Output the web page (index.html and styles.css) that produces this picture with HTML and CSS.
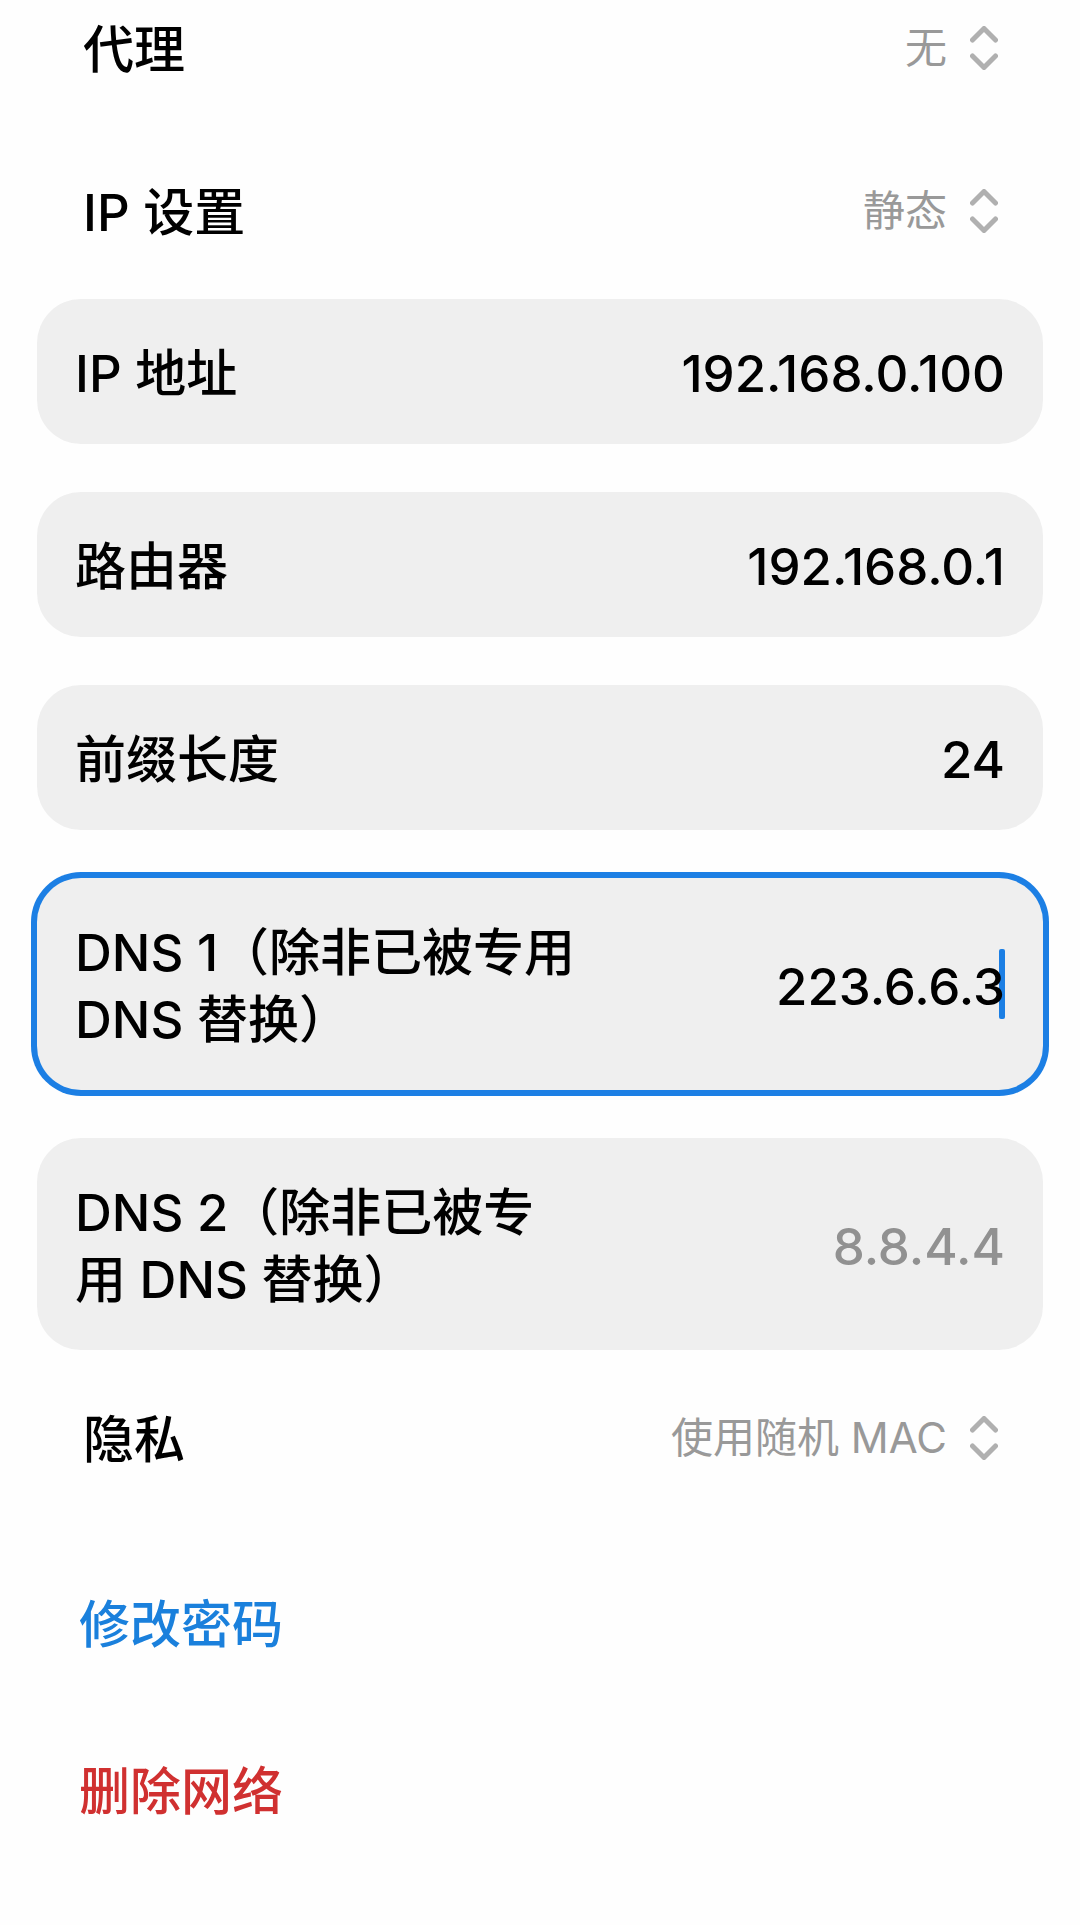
FILE: index.html
```
<!DOCTYPE html>
<html lang="zh-CN">
<head>
<meta charset="utf-8">
<meta name="viewport" content="width=device-width, initial-scale=1">
<title>网络详情</title>
<link rel="stylesheet" href="styles.css">
</head>
<body>
<main class="page">
  <div class="row row-first">
    <label class="row-label" for="proxy">代理</label>
    <select class="row-select" id="proxy"><option>无</option></select>
    <svg class="chevrons" viewBox="0 0 28 44" aria-hidden="true"><path d="M2.500 14 14 2.500 25.500 14M2.500 30 14 41.500 25.500 30"/></svg>
  </div>
  <div class="row">
    <label class="row-label" for="ip-mode">IP 设置</label>
    <select class="row-select" id="ip-mode"><option>静态</option></select>
    <svg class="chevrons" viewBox="0 0 28 44" aria-hidden="true"><path d="M2.500 14 14 2.500 25.500 14M2.500 30 14 41.500 25.500 30"/></svg>
  </div>

  <form class="fields">
    <div class="field">
      <label class="field-label" for="ip">IP 地址</label>
      <input class="field-input" id="ip" type="text" value="192.168.0.100">
    </div>
    <div class="field">
      <label class="field-label" for="router">路由器</label>
      <input class="field-input" id="router" type="text" value="192.168.0.1">
    </div>
    <div class="field">
      <label class="field-label" for="prefix">前缀长度</label>
      <input class="field-input" id="prefix" type="text" value="24">
    </div>
    <div class="field field-active">
      <label class="field-label" for="dns1">DNS 1（除非已被专用<br>DNS 替换）</label>
      <input class="field-input" id="dns1" type="text" value="223.6.6.3">
      <span class="caret"></span>
    </div>
    <div class="field">
      <label class="field-label" for="dns2">DNS 2（除非已被专<br>用 DNS 替换）</label>
      <input class="field-input" id="dns2" type="text" placeholder="8.8.4.4">
    </div>
  </form>

  <div class="row">
    <label class="row-label" for="privacy">隐私</label>
    <select class="row-select" id="privacy"><option>使用随机 MAC</option></select>
    <svg class="chevrons" viewBox="0 0 28 44" aria-hidden="true"><path d="M2.500 14 14 2.500 25.500 14M2.500 30 14 41.500 25.500 30"/></svg>
  </div>

  <div class="actions">
    <button class="action action-edit" type="button">修改密码</button>
    <button class="action action-delete" type="button">删除网络</button>
  </div>
</main>
</body>
</html>
```
FILE: styles.css
```
* {
  box-sizing: border-box;
}

body {
  margin: 0;
  background: #fefefe;
  color: #000;
  font: 500 51px/67px Inter, "Noto Sans CJK SC", sans-serif;
}

.page {
  padding: 0 37px 48px;
}

.row {
  display: flex;
  align-items: center;
  padding: 48px 45px 48px 46px;
}

.row-first {
  padding-top: 14px;
}

.row-label {
  flex: none;
  padding-top: 4px;
  line-height: 63px;
}

.row-select {
  flex: 1;
  min-width: 0;
  height: 67px;
  margin: 0 23px 0 0;
  padding: 0;
  border: 0;
  appearance: none;
  background: transparent;
  color: #999;
  font: 400 42px/67px Inter, "Noto Sans CJK SC", sans-serif;
  text-align: right;
  text-align-last: right;
}

.chevrons {
  flex: none;
  width: 28px;
  height: 44px;
  fill: none;
  stroke: #b0b0b0;
  stroke-width: 5;
  stroke-linecap: round;
  stroke-linejoin: round;
}

.fields {
  display: grid;
  gap: 48px;
  margin: 7px 0 6px;
}

.field {
  position: relative;
  display: flex;
  align-items: center;
  padding: 41px 38px 37px;
  border-radius: 44px;
  background: #efefef;
}

.field-active {
  box-shadow: 0 0 0 6px #1c7fe4;
}

.field-label {
  flex: none;
}

.field-input {
  flex: 1;
  min-width: 0;
  height: 67px;
  padding: 0;
  border: 0;
  outline: 0;
  background: transparent;
  color: inherit;
  font: inherit;
  text-align: right;
}

.field-input::placeholder {
  color: #919191;
  opacity: 1;
}

/* Text cursor, drawn under the digits of the field being edited */
.caret {
  position: absolute;
  top: 50%;
  right: 38px;
  width: 6px;
  height: 70px;
  margin-top: -35px;
  border-radius: 2px;
  background: #1c7fe4;
  z-index: 0;
}

.field-active .field-input {
  position: relative;
  z-index: 1;
}

.actions {
  display: flex;
  flex-direction: column;
  align-items: flex-start;
  margin-top: 22px;
}

.action {
  padding: 50px 42px;
  border: 0;
  background: transparent;
  font: inherit;
}

.action-edit {
  color: #1a80dc;
}

.action-delete {
  color: #d03030;
}
```
